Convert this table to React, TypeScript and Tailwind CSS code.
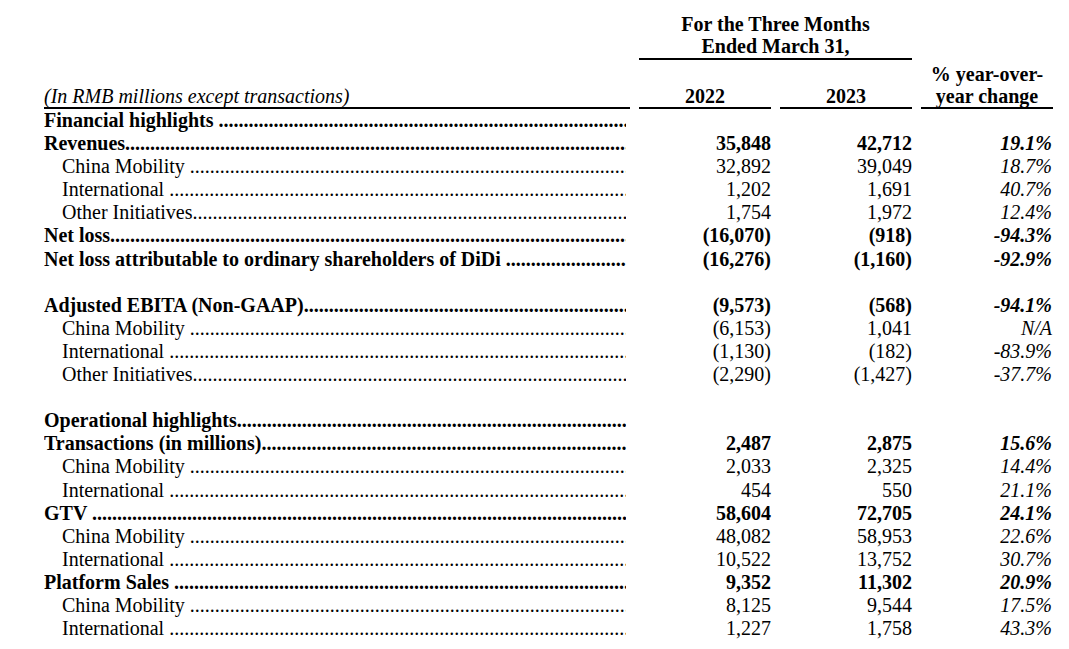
import React from 'react';

type Row =
  | { kind: 'blank' }
  | {
      kind: 'row';
      label: string;
      bold?: boolean;
      indent?: boolean;
      a?: string;
      b?: string;
      pct?: string;
    };

const rows: Row[] = [
  { kind: 'row', label: 'Financial highlights ', bold: true },
  { kind: 'row', label: 'Revenues', bold: true, a: '35,848', b: '42,712', pct: '19.1%' },
  { kind: 'row', label: 'China Mobility ', indent: true, a: '32,892', b: '39,049', pct: '18.7%' },
  { kind: 'row', label: 'International ', indent: true, a: '1,202', b: '1,691', pct: '40.7%' },
  { kind: 'row', label: 'Other Initiatives', indent: true, a: '1,754', b: '1,972', pct: '12.4%' },
  { kind: 'row', label: 'Net loss', bold: true, a: '(16,070)', b: '(918)', pct: '-94.3%' },
  { kind: 'row', label: 'Net loss attributable to ordinary shareholders of DiDi ', bold: true, a: '(16,276)', b: '(1,160)', pct: '-92.9%' },
  { kind: 'blank' },
  { kind: 'row', label: 'Adjusted EBITA (Non-GAAP)', bold: true, a: '(9,573)', b: '(568)', pct: '-94.1%' },
  { kind: 'row', label: 'China Mobility ', indent: true, a: '(6,153)', b: '1,041', pct: 'N/A' },
  { kind: 'row', label: 'International ', indent: true, a: '(1,130)', b: '(182)', pct: '-83.9%' },
  { kind: 'row', label: 'Other Initiatives', indent: true, a: '(2,290)', b: '(1,427)', pct: '-37.7%' },
  { kind: 'blank' },
  { kind: 'row', label: 'Operational highlights', bold: true },
  { kind: 'row', label: 'Transactions (in millions)', bold: true, a: '2,487', b: '2,875', pct: '15.6%' },
  { kind: 'row', label: 'China Mobility ', indent: true, a: '2,033', b: '2,325', pct: '14.4%' },
  { kind: 'row', label: 'International ', indent: true, a: '454', b: '550', pct: '21.1%' },
  { kind: 'row', label: 'GTV ', bold: true, a: '58,604', b: '72,705', pct: '24.1%' },
  { kind: 'row', label: 'China Mobility ', indent: true, a: '48,082', b: '58,953', pct: '22.6%' },
  { kind: 'row', label: 'International ', indent: true, a: '10,522', b: '13,752', pct: '30.7%' },
  { kind: 'row', label: 'Platform Sales ', bold: true, a: '9,352', b: '11,302', pct: '20.9%' },
  { kind: 'row', label: 'China Mobility ', indent: true, a: '8,125', b: '9,544', pct: '17.5%' },
  { kind: 'row', label: 'International ', indent: true, a: '1,227', b: '1,758', pct: '43.3%' },
];

const DOTS = '.'.repeat(160);

const App: React.FC = () => {
  return (
    <div
      className="w-[1069px] h-[649px] bg-white text-black overflow-hidden pl-[44px] pt-[13px] text-[20px]"
      style={{ fontFamily: '"Liberation Serif", "Times New Roman", serif' }}
    >
      {/* Header */}
      <div className="grid grid-cols-[586px_132px_132px_132px] gap-x-[9px] leading-[22px] font-bold">
        <div />
        <div className="col-span-2 text-center border-b-2 border-black pb-[1px]">
          For the Three Months
          <br />
          Ended March 31,
        </div>
        <div />
      </div>
      <div className="grid grid-cols-[586px_132px_132px_132px] gap-x-[9px] leading-[22px] items-end mt-[3px]">
        <div className="italic font-normal border-b-2 border-black">
          (In RMB millions except transactions)
        </div>
        <div className="font-bold text-center border-b-2 border-black">2022</div>
        <div className="font-bold text-center border-b-2 border-black">2023</div>
        <div className="font-bold text-center border-b-2 border-black">
          % year-over-
          <br />
          year change
        </div>
      </div>

      {/* Body */}
      <div className="grid grid-cols-[586px_132px_132px_132px] gap-x-[9px] leading-[23.1px]">
        {rows.map((r, i) =>
          r.kind === 'blank' ? (
            <div key={i} className="col-span-4 h-[23.1px]" />
          ) : (
            <React.Fragment key={i}>
              <div
                className={`flex min-w-0 whitespace-pre overflow-hidden pr-[4px] ${
                  r.bold ? 'font-bold' : 'font-normal pl-[18px]'
                }`}
              >
                <span className="shrink-0">{r.label}</span>
                <span className="flex-1 min-w-0 overflow-hidden">{DOTS}</span>
              </div>
              <div className={`text-right ${r.bold ? 'font-bold' : ''}`}>{r.a}</div>
              <div className={`text-right ${r.bold ? 'font-bold' : ''}`}>{r.b}</div>
              <div className={`text-right italic pr-[1px] ${r.bold ? 'font-bold' : ''}`}>{r.pct}</div>
            </React.Fragment>
          )
        )}
      </div>
    </div>
  );
};

export default App;
